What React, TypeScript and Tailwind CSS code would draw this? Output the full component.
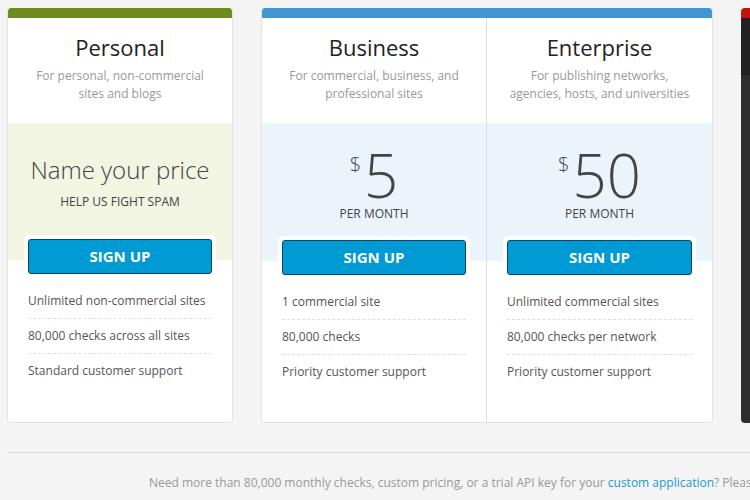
import React from "react";

const font = { fontFamily: '"Open Sans", "Liberation Sans", sans-serif' };

function Features({ items }: { items: string[] }) {
  return (
    <div className="mx-[20px] mt-[6px]">
      {items.map((t, i) => (
        <div
          key={i}
          className={
            "pt-[8px] pb-[8px] text-[12px] leading-[18px] text-[#555] " +
            (i < items.length - 1 ? "border-b border-dashed border-[#dedede]" : "")
          }
        >
          {t}
        </div>
      ))}
    </div>
  );
}

function Header({ title, sub }: { title: string; sub: string[] }) {
  return (
    <div className="flex flex-col items-center pt-[14px] pb-[20px]">
      <div className="text-[22px] leading-[30px] text-[#222]">{title}</div>
      <div className="mt-[5px] text-center text-[12px] leading-[18px] text-[#999]">
        {sub.map((s, i) => (
          <div key={i}>{s}</div>
        ))}
      </div>
    </div>
  );
}

function SignUp() {
  return (
    <div className="relative mx-[16px] mt-[-25px] rounded-[5px] bg-white p-[4px]">
      <div className="flex h-[35px] items-center justify-center rounded-[3px] border border-[#0b4560] bg-[#009ad5] text-[15px] font-bold text-white">
        SIGN UP
      </div>
    </div>
  );
}

function Price({ amount }: { amount: string }) {
  return (
    <div className="flex h-[138px] flex-col items-center bg-[#eaf4fa] pt-[22px]">
      <div className="flex items-start text-[#444]">
        <span className="mt-[8px] mr-[3px] text-[20px] font-light leading-[24px]">$</span>
        <span className="text-[60px] font-light leading-[60px]">{amount}</span>
      </div>
      <div className="mt-[1px] text-[12px] leading-[16px] text-[#444]">PER MONTH</div>
    </div>
  );
}

export default function App() {
  return (
    <div className="h-[500px] w-[750px] overflow-hidden bg-[#f4f4f4]" style={font}>
      <div className="flex gap-[29px] pt-[8px] pl-[7px]">
        {/* Personal */}
        <div className="flex h-[415px] w-[226px] shrink-0 flex-col overflow-hidden rounded-[4px] border border-[#e3e3e3] border-t-0 bg-white">
          <div className="h-[10px] bg-[#6f8b1f]" />
          <Header title="Personal" sub={["For personal, non-commercial", "sites and blogs"]} />
          <div className="flex h-[137px] flex-col items-center bg-[#f1f5e2] pt-[31px]">
            <div className="text-[24px] font-light leading-[32px] text-[#444]">Name your price</div>
            <div className="mt-[8px] text-[12px] leading-[16px] text-[#444]">HELP US FIGHT SPAM</div>
          </div>
          <SignUp />
          <Features
            items={[
              "Unlimited non-commercial sites",
              "80,000 checks across all sites",
              "Standard customer support",
            ]}
          />
        </div>

        {/* Business + Enterprise */}
        <div className="-ml-[1px] flex h-[415px] w-[452px] shrink-0 flex-col overflow-hidden rounded-[4px] border border-[#e3e3e3] border-t-0 bg-white">
          <div className="h-[10px] bg-[#3f96d0]" />
          <div className="flex flex-1">
            <div className="flex w-[225px] flex-col border-r border-[#dcdcdc]">
              <Header title="Business" sub={["For commercial, business, and", "professional sites"]} />
              <Price amount="5" />
              <SignUp />
              <Features items={["1 commercial site", "80,000 checks", "Priority customer support"]} />
            </div>
            <div className="flex w-[225px] flex-col">
              <Header
                title="Enterprise"
                sub={["For publishing networks,", "agencies, hosts, and universities"]}
              />
              <Price amount="50" />
              <SignUp />
              <Features
                items={[
                  "Unlimited commercial sites",
                  "80,000 checks per network",
                  "Priority customer support",
                ]}
              />
            </div>
          </div>
        </div>

        {/* Dark card (partially visible) */}
        <div className="-ml-[1px] flex h-[415px] w-[225px] shrink-0 flex-col overflow-hidden rounded-[4px]">
          <div className="h-[10px] bg-[#c0120f]" />
          <div className="h-[57px] bg-[#222]" />
          <div className="flex-1 bg-[#2e2e2e]" />
        </div>
      </div>

      <div className="mt-[29px] ml-[7px] border-t border-[#dcdcdc]" />
      <div className="mt-[21px] pl-[149px] whitespace-nowrap text-[12px] leading-[18px] text-[#999]">
        Need more than 80,000 monthly checks, custom pricing, or a trial API key for your{" "}
        <span className="text-[#1a9ad6]">custom application</span>? Please contact us.
      </div>
    </div>
  );
}
